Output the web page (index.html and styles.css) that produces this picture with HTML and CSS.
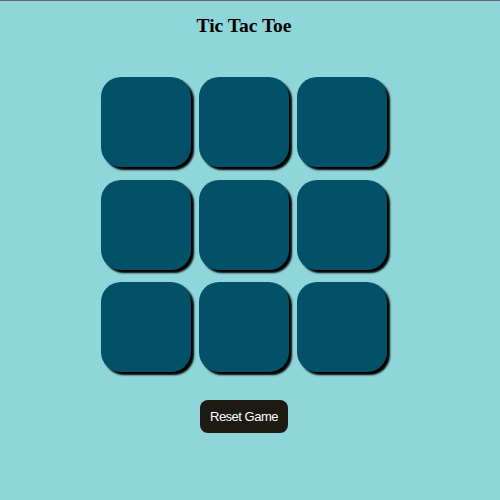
FILE: index.html
```html
<!DOCTYPE html>
<html>
<head>
<meta charset="utf-8">
<link rel="stylesheet" href="styles.css">
</head>
<body>
<div class="page">
  <h3 class="title">Tic Tac Toe</h3>
  <div class="board">
    <div class="cell"></div><div class="cell"></div><div class="cell"></div>
    <div class="cell"></div><div class="cell"></div><div class="cell"></div>
    <div class="cell"></div><div class="cell"></div><div class="cell"></div>
  </div>
  <button class="reset">Reset Game</button>
</div>
</body>
</html>
```
FILE: styles.css
```css
html, body {
  margin: 0;
  padding: 0;
}
body {
  background: #8fd6da;
  border-top: 1px solid #5d6c70;
  height: 499px;
}
.page {
  width: 488px;
  display: flex;
  flex-direction: column;
  align-items: center;
}
.title {
  font-family: "Liberation Serif", serif;
  font-weight: bold;
  font-size: 19.5px;
  line-height: 22px;
  margin: 14px 0 0 0;
  color: #000;
}
.board {
  margin-top: 40px;
  display: grid;
  grid-template-columns: repeat(3, 90px);
  grid-auto-rows: 90px;
  column-gap: 8px;
  row-gap: 12.5px;
}
.cell {
  background: #035069;
  border-radius: 20px;
  box-shadow: 3px 3px 2px #000;
}
.reset {
  margin-top: 28px;
  width: 88px;
  height: 33px;
  border: none;
  border-radius: 8px;
  background: #1c1a13;
  color: #fff;
  font-family: "Liberation Sans", Arial, sans-serif;
  font-size: 13px;
  letter-spacing: -0.5px;
  padding: 0;
}
```
